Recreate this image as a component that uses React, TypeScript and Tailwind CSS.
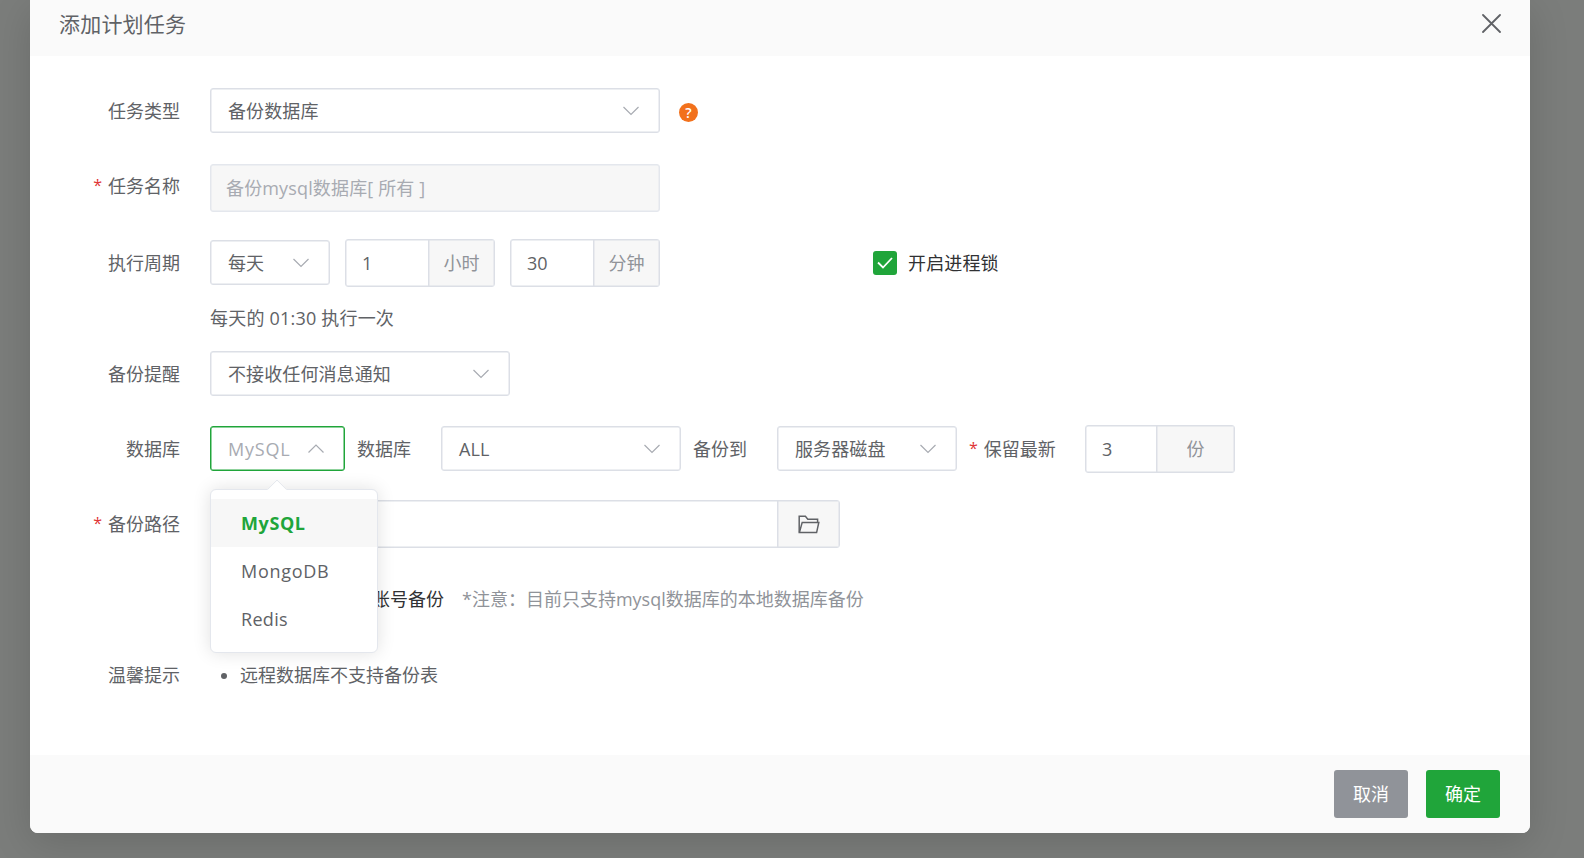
import type { ReactNode } from "react";

const INK = "text-[#606266]";

interface ChevronProps {
  up?: boolean;
}

const Chevron: React.FC<ChevronProps> = ({ up }) => (
  <svg width="18" height="18" viewBox="0 0 18 18" fill="none" stroke="#a8abb2" strokeWidth="1.2">
    <path d={up ? "M1.5 12.5 9 5l7.5 7.5" : "M1.5 5 9 12.5 16.5 5"} />
  </svg>
);

interface SelectProps {
  value: string;
  className: string;
  open?: boolean;
  children?: ReactNode;
}

const Select: React.FC<SelectProps> = ({ value, className, open, children }) => (
  <div
    className={`relative flex h-[45px] shrink-0 items-center justify-between rounded-[3px] border bg-white pl-[17px] pr-[19px] ${
      open
        ? "border-[#20a53a] tracking-[0.8px] text-[#a8abb2] shadow-[inset_0_0_0_0.5px_#20a53a]"
        : "border-[#dcdfe6] tracking-[0.1px] shadow-[inset_0_0_0_0.5px_#dcdfe6]"
    } ${className}`}
  >
    <span>{value}</span>
    <Chevron up={open} />
    {children}
  </div>
);

interface UnitInputProps {
  value: string;
  unit: ReactNode;
  className: string;
  unitClass: string;
}

const UnitInput: React.FC<UnitInputProps> = ({ value, unit, className, unitClass }) => (
  <div
    className={`flex h-12 shrink-0 overflow-hidden rounded-[3px] border border-[#dcdfe6] bg-white shadow-[inset_0_0_0_0.5px_#dcdfe6] ${className}`}
  >
    <div className="flex flex-1 items-center pl-4">{value}</div>
    <div
      className={`flex items-center justify-center border-l border-[#dcdfe6] bg-[#f7f7f7] text-[#909399] shadow-[inset_0_0_0_0.5px_#dcdfe6] ${unitClass}`}
    >
      {unit}
    </div>
  </div>
);

interface RowProps {
  label?: string;
  required?: boolean;
  className: string;
  labelClass?: string;
  children: ReactNode;
}

const Row: React.FC<RowProps> = ({ label, required, className, labelClass = "h-full", children }) => (
  <div className={`flex ${className}`}>
    <div className={`mr-[30px] flex w-[150px] shrink-0 items-center justify-end ${labelClass}`}>
      {required && <Star />}
      {label}
    </div>
    {children}
  </div>
);

const Star = () => <span className="mr-1.5 pb-0.5 text-base text-[#e03535]">*</span>;

const options = [
  { name: "MySQL", className: "bg-[#f7f7f7] font-bold tracking-[0.6px] text-[#20a53a]" },
  { name: "MongoDB", className: "tracking-[0.7px]" },
  { name: "Redis", className: "tracking-[0.3px]" },
];

const TypeMenu = () => (
  <div className="absolute -left-px top-[62px] z-10 h-[164px] w-[168px] rounded-[6px] border border-[#e4e7ed] bg-white pt-[9px] text-[#606266] shadow-[0_0_18px_rgba(0,0,0,0.12)]">
    <div className="absolute -top-[8px] left-[59px] size-[14px] rotate-45 rounded-tl-[2px] border-l border-t border-[#e4e7ed] bg-white" />
    {options.map(({ name, className }) => (
      <div key={name} className={`relative flex h-12 items-center pl-[30px] ${className}`}>
        {name}
      </div>
    ))}
  </div>
);

const FolderIcon = () => (
  <svg width="22" height="19" viewBox="0 0 22 19" fill="none" stroke="#606266" strokeWidth="1.5">
    <path d="M1.2 17.6V1.2h6.2l2.4 3h9.8v3" />
    <path d="M4.2 7.4h16.6l-2.2 10.2H1.4z" />
  </svg>
);

const App = () => {
  return (
    <div
      className={`h-[858px] w-[1584px] overflow-hidden bg-[#7b7d7b] px-[30px] text-[18px] leading-6 ${INK} font-['Open_Sans','Noto_Sans_CJK_SC',sans-serif]`}
    >
      <div className="flex h-[833px] w-[1500px] flex-col overflow-hidden rounded-b-[8px] bg-white shadow-[0_10px_40px_rgba(0,0,0,0.14)]">
        <div className="flex h-14 shrink-0 items-center justify-between bg-[#fafafa] pb-[9px] pl-[29px] pr-[29px] text-[21px]">
          <span className="tracking-[0.2px]">添加计划任务</span>
          <svg width="19" height="19" viewBox="0 0 19 19" stroke="#606266" strokeWidth="1.8" strokeLinecap="round">
            <path d="m1 1 17 17M18 1 1 18" />
          </svg>
        </div>

        <div className="flex flex-1 flex-col pt-8">
          <Row label="任务类型" className="h-[45px]">
            <Select value="备份数据库" className="w-[450px]" />
            <div className="ml-[19px] mt-[15px] flex size-[19px] items-center justify-center rounded-full bg-[#f2711c] text-[14px] font-semibold leading-none text-white">
              ?
            </div>
          </Row>

          <Row label="任务名称" required className="mt-[31px] h-12" labelClass="h-[43px]">
            <div className="flex h-12 w-[450px] items-center rounded-[3px] border border-[#e4e7ed] bg-[#f7f7f7] pb-px pl-[15px] tracking-[0.15px] text-[#a8abb2] shadow-[inset_0_0_0_0.5px_#e4e7ed]">
              备份mysql数据库[ 所有 ]
            </div>
          </Row>

          <Row label="执行周期" className="mt-[27px] h-12">
            <Select value="每天" className="mt-px w-[120px]" />
            <UnitInput value="1" unit="小时" className="ml-[15px] w-[150px]" unitClass="w-[66px]" />
            <UnitInput value="30" unit="分钟" className="ml-[15px] w-[150px]" unitClass="w-[66px]" />
            <div className="ml-[213px] flex items-center text-[#303133]">
              <div className="mr-[11px] flex size-6 items-center justify-center rounded-[3px] bg-[#20a53a]">
                <svg width="16" height="12" viewBox="0 0 16 12" fill="none" stroke="white" strokeWidth="1.8">
                  <path d="m1 5.5 5 5L15 1" />
                </svg>
              </div>
              <span className="tracking-[0.15px]">开启进程锁</span>
            </div>
          </Row>
          <div className="ml-[180px] mt-[19px] tracking-[0.2px]">每天的 01:30 执行一次</div>

          <Row label="备份提醒" className="mt-[21px] h-[45px]">
            <Select value="不接收任何消息通知" className="w-[300px]" />
          </Row>

          <Row label="数据库" className="mt-[29px] h-12">
            <Select value="MySQL" open className="mt-px w-[135px]">
              <TypeMenu />
            </Select>
            <div className="ml-3 flex w-[84px] items-center">数据库</div>
            <Select value="ALL" className="mt-px w-[240px]" />
            <div className="ml-3 flex w-[84px] items-center">备份到</div>
            <Select value="服务器磁盘" className="mt-px w-[180px]" />
            <div className="ml-3 flex w-[116px] items-center">
              <Star />
              保留最新
            </div>
            <UnitInput value="3" unit="份" className="w-[150px]" unitClass="w-[78px]" />
          </Row>

          <Row label="备份路径" required className="mt-[27px] h-12">
            <UnitInput value="" unit={<FolderIcon />} className="w-[630px]" unitClass="w-[62px]" />
          </Row>

          <div className="ml-[342px] mt-[39px] flex">
            <span className="text-[#303133]">账号备份</span>
            <span className="ml-[18px] text-[#909399]">*注意：目前只支持mysql数据库的本地数据库备份</span>
          </div>

          <Row label="温馨提示" className="mt-[52px] h-6">
            <ul className="ml-[30px] list-disc marker:text-[#606266]">
              <li>远程数据库不支持备份表</li>
            </ul>
          </Row>
        </div>

        <div className="flex h-[78px] shrink-0 items-center justify-end gap-[18px] bg-[#fafafa] pr-[30px] text-white">
          <button className="h-12 w-[74px] rounded-[3px] bg-[#909399]">取消</button>
          <button className="h-12 w-[74px] rounded-[3px] bg-[#20a53a]">确定</button>
        </div>
      </div>
    </div>
  );
};

export default App;
